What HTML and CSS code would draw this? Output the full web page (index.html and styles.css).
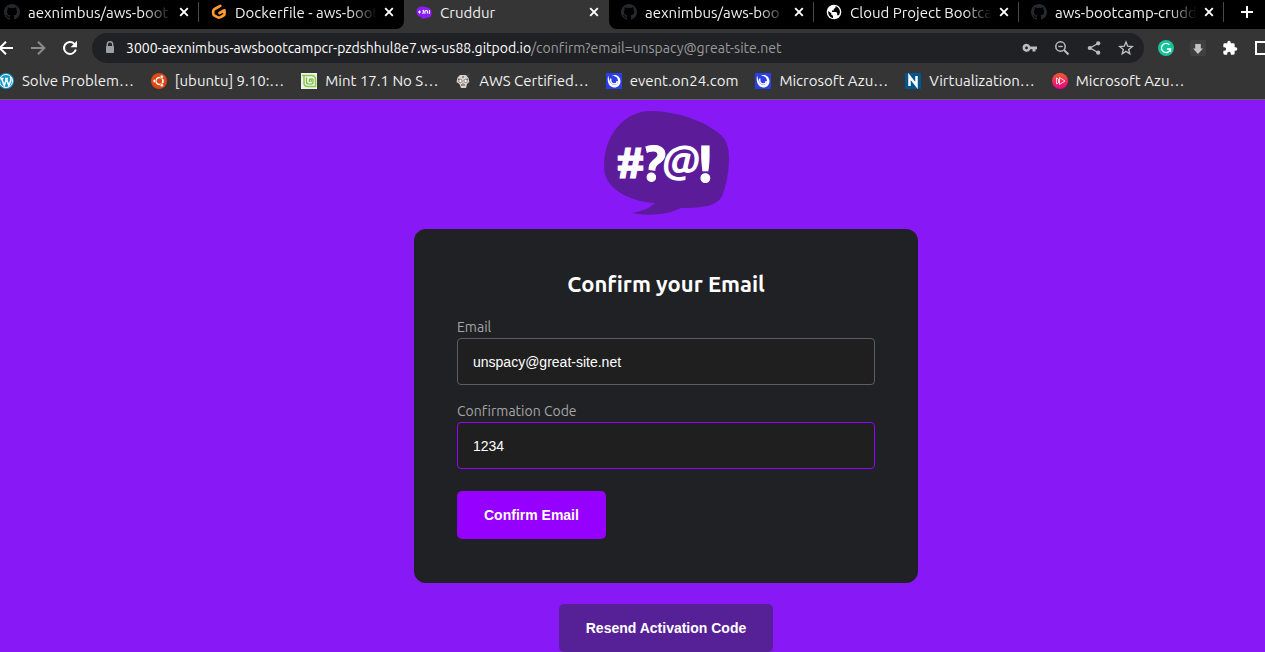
FILE: index.html
```html
<!DOCTYPE html>
<html lang="en">
<head>
<meta charset="utf-8">
<meta name="viewport" content="width=device-width, initial-scale=1">
<title>Cruddur</title>
<link rel="stylesheet" href="styles.css">
</head>
<body>
<svg class="sprite" aria-hidden="true">
  <symbol id="github" viewBox="0 0 16 16"><path fill="#24292f" d="M8 0C3.58 0 0 3.58 0 8c0 3.54 2.29 6.53 5.47 7.59.4.07.55-.17.55-.38 0-.19-.01-.82-.01-1.49-2.01.37-2.53-.49-2.69-.94-.09-.23-.48-.94-.82-1.13-.28-.15-.68-.52-.01-.53.63-.01 1.08.58 1.23.82.72 1.21 1.87.87 2.33.66.07-.52.28-.87.51-1.07-1.78-.2-3.64-.89-3.64-3.95 0-.87.31-1.59.82-2.15-.08-.2-.36-1.02.08-2.12 0 0 .67-.21 2.2.82a7.4 7.4 0 0 1 4 0c1.53-1.04 2.2-.82 2.2-.82.44 1.1.16 1.92.08 2.12.51.56.82 1.27.82 2.15 0 3.07-1.87 3.75-3.65 3.95.29.25.54.73.54 1.48 0 1.07-.01 1.93-.01 2.2 0 .21.15.46.55.38A8 8 0 0 0 8 0z"/></symbol>
  <symbol id="close" viewBox="0 0 10 10"><path d="M1.2 1.2l7.6 7.6M8.8 1.2L1.2 8.8" stroke="#fff" stroke-width="1.9" fill="none"/></symbol>
  <symbol id="on24" viewBox="0 0 16 16"><path fill="#2a3fe8" d="M0 0h16v16H0z"/><path d="M2.200 2.500C.5 9 3.500 14.500 8.300 14.500c3.600 0 6.200-2.800 6.200-6.300S11.800 2 8.600 2C7.500 2 6.500 2.300 5.700 2.800 9.500 2.500 12 5 12 8c0 2.300-1.600 4-3.700 4C5 12 3.500 8.500 2.200 2.500z" fill="#fff"/><path d="M4.800 5.500c-.6 3.500 1.200 5.500 3.400 5.500 1.800 0 3-1.300 3-3" fill="none" stroke="#fff" stroke-width="1.400"/></symbol>
</svg>

<header class="browser">
  <nav class="tabs" aria-label="Tabs">
    <div class="tab tab-first">
      <svg class="icon"><use href="#github"/></svg><span class="tab-title fade">aexnimbus/aws-boot</span>
      <button class="close" aria-label="Close tab"><svg><use href="#close"/></svg></button>
    </div>
    <div class="tab">
      <svg class="icon" viewBox="0 0 16 16"><path d="M9.300 1.900L3.200 5.300Q2.200 5.900 2.200 7v2.600q0 1.200 1 1.800l3.600 2q1.200.6 2.400 0l3.300-1.900q1-.6 1-1.800V6.300L8.500 9" fill="none" stroke="#ff9a2e" stroke-width="2.700" stroke-linejoin="round" stroke-linecap="round"/></svg><span class="tab-title fade">Dockerfile - aws-boot</span>
      <button class="close" aria-label="Close tab"><svg><use href="#close"/></svg></button>
    </div>
    <div class="tab active">
      <svg class="icon" viewBox="0 0 16 16"><path d="M.5 8C.5 3.500 3.500 2.200 7 2.500c4 .2 8.500 2.200 8.700 5.300.2 2.200-.4 4.700-1.500 5.200-2 .8-3.200.6-4.500 1.300-1.200.5-3 .6-4.700.1l1.500-.9C3 13 .5 11 .5 8z" fill="#8a1cf5"/><path d="M2 8h3M3.500 6.500v3M6.500 6.500q1.800-.5.800 1.500l-.4 2M9 9.800q-.6-3.300 1.300-3.300t.9 3M13.500 6l-.2 4" stroke="#fff" fill="none" stroke-width="1.100"/></svg><span class="tab-title">Cruddur</span>
      <button class="close" aria-label="Close tab"><svg><use href="#close"/></svg></button>
    </div>
    <div class="tab">
      <svg class="icon"><use href="#github"/></svg><span class="tab-title fade">aexnimbus/aws-boo</span>
      <button class="close" aria-label="Close tab"><svg><use href="#close"/></svg></button>
    </div>
    <div class="tab">
      <svg class="icon" viewBox="0 0 16 16"><circle cx="8" cy="8" r="7.300" fill="#fff"/><path d="M2.300 7l3 2.200v1.600l1.700 1v2.200C4 13.600 1.800 10.500 2.300 7zM9.500 2.200v1.500L7.700 5v1.500H6v1.600h4.200l1 1.400v1.800h1.600C14.500 9 14.200 6 12.800 4.400 12 3.300 11 2.500 9.500 2.200z" fill="#000"/></svg><span class="tab-title fade">Cloud Project Bootca</span>
      <button class="close" aria-label="Close tab"><svg><use href="#close"/></svg></button>
    </div>
    <div class="tab">
      <svg class="icon"><use href="#github"/></svg><span class="tab-title fade">aws-bootcamp-crudd</span>
      <button class="close" aria-label="Close tab"><svg><use href="#close"/></svg></button>
    </div>
    <button class="new-tab" aria-label="New tab"><svg viewBox="0 0 12 12"><path d="M6 0v12M0 6h12" stroke="#fff" stroke-width="2"/></svg></button>
  </nav>

  <div class="toolbar">
    <div class="nav-buttons">
      <button class="tool" aria-label="Back"><svg viewBox="0 0 16 16"><path d="M15 8H2M8 1.700L1.700 8 8 14.300" fill="none" stroke="#fff" stroke-width="2"/></svg></button>
      <button class="tool" aria-label="Forward"><svg viewBox="0 0 16 16"><path d="M1 8h13M8 1.700L14.300 8 8 14.300" fill="none" stroke="#8b8b8b" stroke-width="2"/></svg></button>
      <button class="tool" aria-label="Reload"><svg viewBox="0 0 16 16"><path d="M13.800 9.500A6 6 0 1 1 12.200 3.700L13.500 5" fill="none" stroke="#fff" stroke-width="2"/><path d="M15 .8v6.400H8.600z" fill="#fff"/></svg></button>
    </div>
    <div class="omnibox">
      <svg class="lock" viewBox="0 0 10 14"><path d="M2.300 6V3.500a2.700 2.700 0 0 1 5.400 0V6" fill="none" stroke="#9aa0a6" stroke-width="1.400"/><rect x="1" y="5" width="8" height="7" rx="1" fill="#9aa0a6"/></svg>
      <div class="url" role="textbox" aria-label="Address" tabindex="0"><span class="host">3000-aexnimbus-awsbootcampcr-pzdshhul8e7.ws-us88.gitpod.io</span>/confirm?email=unspacy@great-site.net</div>
      <button class="tool" aria-label="Passwords"><svg viewBox="0 0 16 16"><path d="M4.500 3.800a4 4 0 1 0 3.800 5.400h2.200v2.300h3V9.200H15V6.400H8.300a4 4 0 0 0-3.800-2.600zm0 2.700a1.400 1.400 0 1 1 0 2.800 1.400 1.400 0 0 1 0-2.800z" fill="#bdbdbd"/></svg></button>
      <button class="tool" aria-label="Zoom out"><svg viewBox="0 0 16 16"><circle cx="6.500" cy="6.500" r="4.700" fill="none" stroke="#bdbdbd" stroke-width="1.500"/><path d="M10 10l4.500 4.500" stroke="#bdbdbd" stroke-width="2"/><path d="M4.300 6.500h4.400" stroke="#bdbdbd" stroke-width="1.300"/></svg></button>
      <button class="tool" aria-label="Share"><svg viewBox="0 0 16 16"><path d="M12 3.500L4 8l8 4.500" fill="none" stroke="#bdbdbd" stroke-width="1.400"/><g fill="#bdbdbd"><circle cx="12.200" cy="3.300" r="2.100"/><circle cx="3.800" cy="8" r="2.100"/><circle cx="12.200" cy="12.700" r="2.100"/></g></svg></button>
      <button class="tool" aria-label="Bookmark"><svg viewBox="0 0 16 16"><path d="M8 2l1.700 4.200 4.500.3-3.500 2.900 1.100 4.400L8 11.400l-3.800 2.400 1.100-4.400L1.800 6.500l4.500-.3z" fill="none" stroke="#bdbdbd" stroke-width="1.400"/></svg></button>
    </div>
    <div class="extensions">
      <button class="tool" aria-label="Grammarly"><svg viewBox="0 0 16 16"><circle cx="8" cy="8" r="8" fill="#15c39a"/><path d="M11.300 4.700A4.600 4.600 0 1 0 12.500 9H9M12.500 8.500V12" fill="none" stroke="#fff" stroke-width="1.400"/></svg></button>
      <button class="tool" aria-label="Downloads"><svg viewBox="0 0 16 16"><rect width="16" height="16" rx="2" fill="#404040"/><path d="M5.200 4h5.600v4.500H13l-5 5.500-5-5.500h2.200z" fill="#c4c4c4"/></svg></button>
      <button class="tool" aria-label="Extensions"><svg viewBox="0 0 24 24"><path fill="#fff" d="M20.500 11H19V7a2 2 0 0 0-2-2h-4V3.500a2.500 2.500 0 0 0-5 0V5H4a2 2 0 0 0-2 2v3.800h1.500a2.700 2.700 0 0 1 0 5.400H2V20a2 2 0 0 0 2 2h3.800v-1.500a2.700 2.700 0 0 1 5.400 0V22H17a2 2 0 0 0 2-2v-4h1.500a2.500 2.500 0 0 0 0-5z"/></svg></button>
      <button class="tool" aria-label="Side panel"><svg viewBox="0 0 16 16"><path d="M2 2h12v12H2z" fill="none" stroke="#fff" stroke-width="2"/></svg></button>
    </div>
  </div>

  <nav class="bookmarks" aria-label="Bookmarks">
    <a href="#"><svg class="icon" viewBox="0 0 16 16"><circle cx="8" cy="8" r="8" fill="#1399cb"/><circle cx="8" cy="8" r="6.500" fill="none" stroke="#fff"/><path d="M2.500 5.500h3M3.500 5.500L6.200 12.500 8.300 6.500M7 5.500h3M8.300 5.500l2.500 7L13 7q.3-2-1-3" fill="none" stroke="#fff" stroke-width="1.500"/></svg>Solve Problem…</a>
    <a href="#"><svg class="icon" viewBox="0 0 16 16"><circle cx="8" cy="8" r="8" fill="#dd4814"/><circle cx="8.500" cy="8" r="3.500" fill="none" stroke="#fff" stroke-width="1.700"/><g fill="#fff" stroke="#dd4814" stroke-width=".7"><circle cx="3.500" cy="8" r="1.700"/><circle cx="10.800" cy="3.800" r="1.700"/><circle cx="10.800" cy="12.200" r="1.700"/></g></svg>[ubuntu] 9.10:…</a>
    <a href="#"><svg class="icon" viewBox="0 0 16 16"><path fill="#f1f1f1" d="M0 0h16v16H0z"/><path d="M1 2.500h9.500q4 0 4 4v7H6.500q-3.500 0-3.500-3.500V3" fill="none" stroke="#87cf3e" stroke-width="1.500"/><path d="M5.500 4.500V9q0 2 2 2H10q2 0 2-2V6.800q0-1-.9-1t-.9 1V9M10.200 6.800q0-1-.9-1t-.9 1V9" fill="none" stroke="#78bb37" stroke-width="1.200"/></svg>Mint 17.1 No S…</a>
    <a href="#"><svg class="icon" viewBox="0 0 16 16"><path d="M2.500 4.500L5 2h6l2.500 3 .8 4-2.300 2-1 4H6l-1.500-4L1.500 9z" fill="#d9d4cf"/><path d="M12 3l2.500-2.500M3 6l3 1M13 6l-3 1M6 12h4M7 4h2" stroke="#4d4542" stroke-width="1.200"/><circle cx="5.400" cy="8" r="1.700" fill="#fff" stroke="#8b827e"/><circle cx="10.600" cy="8" r="1.700" fill="#fff" stroke="#8b827e"/><path d="M7 10h2l-1 1.500z" fill="#b37f6c"/></svg>AWS Certified…</a>
    <a href="#"><svg class="icon"><use href="#on24"/></svg>event.on24.com</a>
    <a href="#"><svg class="icon"><use href="#on24"/></svg>Microsoft Azu…</a>
    <a href="#"><svg class="icon" viewBox="0 0 16 16"><path fill="#00558c" d="M0 0h16v16H0z"/><path d="M4.500 13V3.500L11.500 12.500V3" fill="none" stroke="#fff" stroke-width="2.500"/></svg>Virtualization…</a>
    <a href="#"><svg class="icon" viewBox="0 0 16 16"><defs><linearGradient id="ps" x2="0" y2="1"><stop stop-color="#f15b2a"/><stop offset="1" stop-color="#ec008c"/></linearGradient></defs><circle cx="8" cy="8" r="8" fill="url(#ps)"/><path d="M4.500 5v6l2-1.200V6.200zM7.500 4.500v7L13 8z" fill="none" stroke="#fff" stroke-width=".8"/></svg>Microsoft Azu…</a>
  </nav>
</header>

<main class="page">
  <svg class="logo" viewBox="0 0 126 106" role="img" aria-label="Cruddur">
    <path d="M1 57C1 22 24 0 49 1c32 1 57 13 70 25 6 7 7 14 7 23 0 13-3 28-7 37-5 10-18 12-41 12-10 5-28 9-49 5 10-2 17-4 23-10C23 91 1 77 1 57z" fill="#5c1c9a"/>
    <g class="logo-text">
      <text x="13" y="68" font-size="42">#</text>
      <text x="40" y="71" font-size="50" transform="rotate(6 52 55)">?</text>
      <text class="at" x="59" y="64" font-size="40">@</text>
      <text x="95" y="72" font-size="52">!</text>
    </g>
  </svg>
  <form class="card">
    <h1>Confirm your Email</h1>
    <div class="field">
      <label for="email">Email</label>
      <input id="email" type="text" value="unspacy@great-site.net">
    </div>
    <div class="field">
      <label for="code">Confirmation Code</label>
      <input id="code" class="current" type="text" value="1234">
    </div>
    <button class="button" type="submit">Confirm Email</button>
  </form>
  <button class="button resend" type="button">Resend Activation Code</button>
</main>
</body>
</html>
```
FILE: styles.css
```css
* { box-sizing: border-box; }

html { height: 100%; }

body {
  display: flex;
  flex-direction: column;
  min-height: 100%;
  margin: 0;
  overflow: hidden;
  background: #8818f5;
  font-family: Ubuntu, "Noto Sans", "Open Sans", sans-serif;
  font-variant-ligatures: none;
}

button {
  border: 0;
  padding: 0;
  background: none;
  font: inherit;
  cursor: pointer;
}

.sprite { position: absolute; width: 0; height: 0; }

.icon { flex: none; width: 16px; height: 16px; }

.browser {
  overflow: hidden;
  border-bottom: 1px solid #69606f;
  background: #353535;
  color: #f0f0f0;
  font-size: 15px;
}

/* Tab strip */
.tabs {
  display: flex;
  height: 29px;
  background: linear-gradient(90deg, #000 30%, #353535 30% 50%, #000 50%);
}

.tab {
  display: flex;
  flex: 0 1 205px;
  align-items: center;
  gap: 8px;
  min-width: 0;
  padding: 0 10px 5px 12px;
  background:
    linear-gradient(#4a4a4a, #4a4a4a) right 2px / 1px 20px no-repeat,
    #000;
}

.tab-first { flex-basis: 199px; padding-left: 4px; }

.tab.active { background: #353535; }

.tab:has(+ .active) { border-radius: 0 0 8px; background: #000; }

.tab.active + .tab { border-radius: 0 0 0 8px; }

.tab-title {
  flex: 1;
  min-width: 0;
  overflow: hidden;
  white-space: nowrap;
}

.fade {
  margin-right: -5px;
  mask-image: linear-gradient(90deg, #000 78%, transparent 97%);
}

.close, .close svg { display: block; width: 10px; height: 10px; }

.new-tab { margin-left: 17px; padding-bottom: 5px; }

.new-tab svg { display: block; width: 12px; height: 12px; }

/* Toolbar */
.toolbar {
  display: flex;
  align-items: center;
  height: 38px;
}

.tool { flex: none; width: 16px; height: 16px; }

.tool svg { display: block; width: 16px; height: 16px; }

.nav-buttons {
  display: flex;
  gap: 16px;
  margin-left: -2px;
  padding-right: 14px;
}

.omnibox {
  display: flex;
  flex: 1;
  align-items: center;
  gap: 16px;
  min-width: 0;
  height: 30px;
  padding: 0 10px 0 13px;
  border-radius: 15px;
  background: #202124;
}

.lock { flex: none; width: 10px; height: 14px; }

.url {
  flex: 1;
  overflow: hidden;
  margin-left: -5px;
  color: #9a9a9a;
  font-size: 14px;
  white-space: nowrap;
}

.host { color: #fff; }

.extensions {
  display: flex;
  gap: 16px;
  margin-right: -5px;
  padding-left: 14px;
}

/* Bookmarks bar */
.bookmarks {
  display: flex;
  gap: 17px;
  height: 32px;
  margin-left: -2px;
  padding-bottom: 5px;
}

.bookmarks a {
  display: flex;
  flex: none;
  align-items: center;
  gap: 8px;
  color: inherit;
  text-decoration: none;
  white-space: nowrap;
}

/* Confirmation page */
.page {
  display: flex;
  flex: 1;
  flex-direction: column;
  align-items: center;
  padding: 10px 0 0 67px;
}

.logo { width: 126px; height: 106px; }

.logo-text {
  fill: #fff;
  stroke: #fff;
  stroke-width: 1;
  font-weight: 700;
}

.logo-text .at { font-style: italic; stroke-width: 0; }

.card {
  width: 100%;
  max-width: 504px;
  margin: 13px 0 21px;
  padding: 41px 43px 44px;
  border-radius: 12px;
  background: #202124;
}

h1 {
  margin: 0 0 19px;
  color: #fff;
  font-size: 22px;
  line-height: 28px;
  text-align: center;
}

.field { margin-bottom: 16px; }

.field label {
  display: block;
  color: #a5a5a7;
  font-size: 14px;
  line-height: 21px;
}

.field input {
  width: 100%;
  height: 47px;
  padding: 0 15px;
  border: 1px solid #5e5e60;
  border-radius: 4px;
  outline: 0;
  background: #1f1f1f;
  color: #fff;
  font: 14px "Liberation Sans", Arial, sans-serif;
}

.field .current { border-color: #9500ff; }

.button {
  height: 48px;
  margin-top: 6px;
  padding: 0 27px;
  border-radius: 5px;
  background: #9500ff;
  color: #fff;
  font: bold 14px "Liberation Sans", Arial, sans-serif;
}

.resend { margin: 0; background: #562196; }
```
